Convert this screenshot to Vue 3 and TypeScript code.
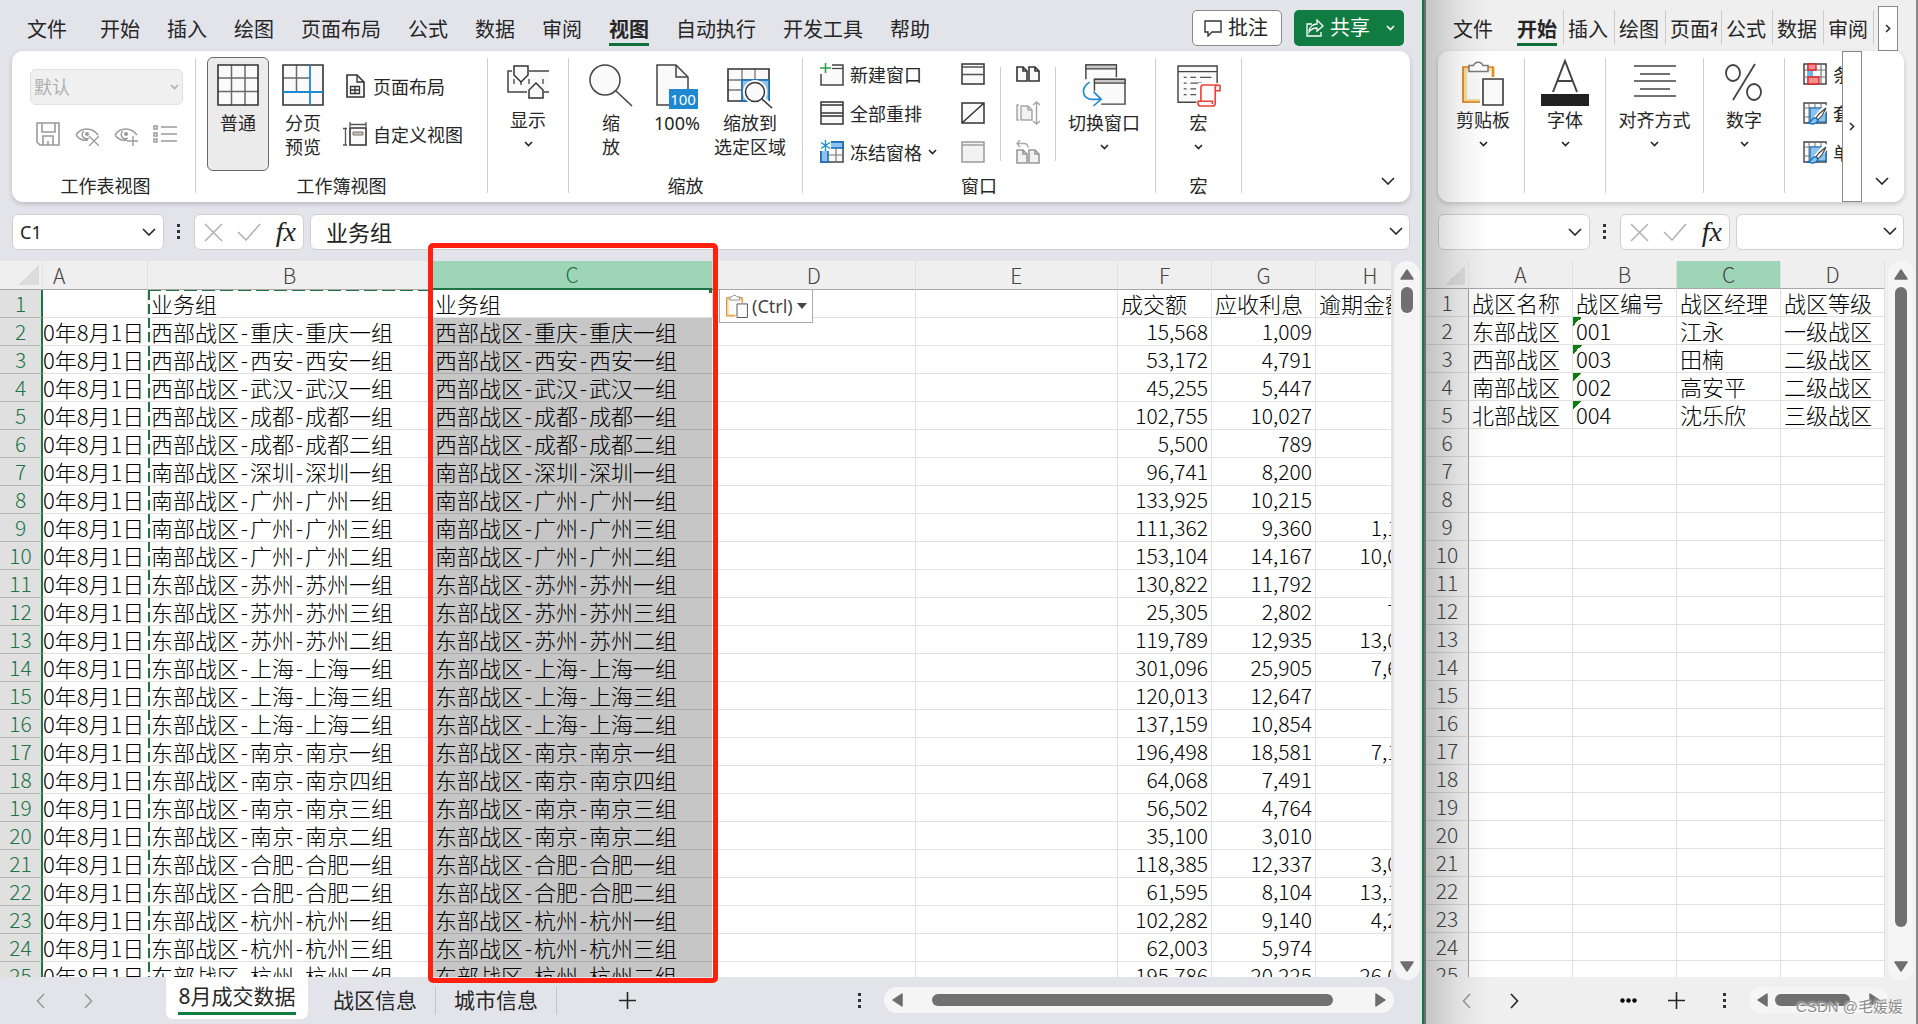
<script setup lang="ts">
import { ref } from 'vue'

interface DealRow {
  group: string
  amount: string
  interest: string
  overdue: string
}

const leftTabs: string[] = ['文件', '开始', '插入', '绘图', '页面布局', '公式', '数据', '审阅', '视图', '自动执行', '开发工具', '帮助']
const rightTabs: string[] = ['插入', '绘图', '页面布局', '公式', '数据', '审阅']
const sheets: string[] = ['8月成交数据', '战区信息', '城市信息']

const activeTab = ref('视图')
const activeSheet = ref('8月成交数据')
const nameBox = ref('C1')
const formula = ref('业务组')
const rightName = ref('')
const rightFormula = ref('')

const deal = (group: string, amount: string, interest: string, overdue = ''): DealRow => ({ group, amount, interest, overdue })

const deals: DealRow[] = [
  deal('西部战区-重庆-重庆一组', '15,568', '1,009'),
  deal('西部战区-西安-西安一组', '53,172', '4,791'),
  deal('西部战区-武汉-武汉一组', '45,255', '5,447'),
  deal('西部战区-成都-成都一组', '102,755', '10,027'),
  deal('西部战区-成都-成都二组', '5,500', '789'),
  deal('南部战区-深圳-深圳一组', '96,741', '8,200'),
  deal('南部战区-广州-广州一组', '133,925', '10,215'),
  deal('南部战区-广州-广州三组', '111,362', '9,360', '1,100'),
  deal('南部战区-广州-广州二组', '153,104', '14,167', '10,000'),
  deal('东部战区-苏州-苏州一组', '130,822', '11,792'),
  deal('东部战区-苏州-苏州三组', '25,305', '2,802', '700'),
  deal('东部战区-苏州-苏州二组', '119,789', '12,935', '13,000'),
  deal('东部战区-上海-上海一组', '301,096', '25,905', '7,600'),
  deal('东部战区-上海-上海三组', '120,013', '12,647'),
  deal('东部战区-上海-上海二组', '137,159', '10,854'),
  deal('东部战区-南京-南京一组', '196,498', '18,581', '7,100'),
  deal('东部战区-南京-南京四组', '64,068', '7,491'),
  deal('东部战区-南京-南京三组', '56,502', '4,764'),
  deal('东部战区-南京-南京二组', '35,100', '3,010'),
  deal('东部战区-合肥-合肥一组', '118,385', '12,337', '3,000'),
  deal('东部战区-合肥-合肥二组', '61,595', '8,104', '13,100'),
  deal('东部战区-杭州-杭州一组', '102,282', '9,140', '4,200'),
  deal('东部战区-杭州-杭州三组', '62,003', '5,974'),
  deal('东部战区-杭州-杭州二组', '195,786', '20,225', '26,000'),
]

const zones: string[][] = [
  ['战区名称', '战区编号', '战区经理', '战区等级'],
  ['东部战区', '001', '江永', '一级战区'],
  ['西部战区', '003', '田楠', '二级战区'],
  ['南部战区', '002', '高安平', '二级战区'],
  ['北部战区', '004', '沈乐欣', '三级战区'],
]

const zoneRows: string[][] = Array.from({ length: 25 }, (_, i) => zones[i] ?? ['', '', '', ''])
const pieces = (text: string): string[] => text.split(/(-)/)
</script>

<template>
  <svg class="defs" aria-hidden="true">
    <symbol id="chev" viewBox="0 0 14 8"><path d="M1 1l6 6 6-6" fill="none" stroke="currentColor" stroke-width="1.6" /></symbol>
    <symbol id="chev-s" viewBox="0 0 9 6"><path d="M1 1l3.5 3.6L8 1" fill="none" stroke="currentColor" stroke-width="1.6" /></symbol>
    <symbol id="left" viewBox="0 0 9 16"><path d="M8 1L1.500 8 8 15" fill="none" stroke="currentColor" stroke-width="1.6" /></symbol>
    <symbol id="right" viewBox="0 0 9 16"><path d="M1 1l6.500 7L1 15" fill="none" stroke="currentColor" stroke-width="1.6" /></symbol>
    <symbol id="right-s" viewBox="0 0 6 9"><path d="M1 1l3.600 3.500L1 8" fill="none" stroke="currentColor" stroke-width="1.5" /></symbol>
    <symbol id="kebab" viewBox="0 0 4 16"><path d="M0 0h3v3H0zM0 6h3v3H0zM0 12h3v3H0z" fill="#333" /></symbol>
    <symbol id="plus" viewBox="0 0 17 17"><path d="M8.500 0v17M0 8.500h17" stroke="currentColor" stroke-width="1.6" /></symbol>
    <symbol id="tri-up" viewBox="0 0 14 11"><path d="M7 1l6 9H1z" fill="#6e6e6e" stroke="#6e6e6e" stroke-linejoin="round" stroke-width="1.500" /></symbol>
    <symbol id="tri-down" viewBox="0 0 14 11"><path d="M7 10L1 1h12z" fill="#6e6e6e" stroke="#6e6e6e" stroke-linejoin="round" stroke-width="1.500" /></symbol>
    <symbol id="tri-left" viewBox="0 0 11 14"><path d="M1 7l9-6v12z" fill="#6e6e6e" stroke="#6e6e6e" stroke-linejoin="round" stroke-width="1.500" /></symbol>
    <symbol id="tri-right" viewBox="0 0 11 14"><path d="M10 7L1 1v12z" fill="#6e6e6e" stroke="#6e6e6e" stroke-linejoin="round" stroke-width="1.500" /></symbol>
    <symbol id="cross" viewBox="0 0 19 19"><path d="M1 1l17 17M18 1L1 18" fill="none" stroke="#b0b0b0" stroke-width="1.500" /></symbol>
    <symbol id="tick" viewBox="0 0 24 18"><path d="M1 9l8 8L23 1" fill="none" stroke="#b0b0b0" stroke-width="1.500" /></symbol>
    <symbol id="clip" viewBox="0 0 42 46">
      <path d="M3 9h28v32H3z" fill="#fafafa" stroke="#f6dc9c" stroke-width="4" />
      <path d="M20 42H1V7h6M25 7h6v10" fill="none" stroke="#e07c1a" stroke-width="1.700" />
      <path d="M7 5.500h4.500a5 5 0 0 1 9.400 0H26v6H7z" fill="#fff" stroke="#7a7a7a" stroke-width="1.500" />
      <path d="M18 17h24v29H18z" fill="#fff" /><path d="M21 19h20v26H21z" fill="#fafafa" stroke="#3a3a3a" stroke-width="1.600" />
    </symbol>
    <symbol id="brushgrid" viewBox="0 0 24 24">
      <path d="M1 2h22v20H1z" fill="#fafafa" stroke="#444" stroke-width="1.400" />
      <path d="M6 2v20M12 2v20M18 2v20M1 7h22M1 16h22" stroke="#777" stroke-width="1" />
      <path d="M7 7h16v14H7z" fill="#8cc3ee" stroke="#1068b8" stroke-width="1.200" />
      <path d="M24 5L13 18" stroke="#fff" stroke-width="6" />
      <path d="M23 7l-7 6-3 4 2 2 4-4z" fill="#fff" stroke="#444" stroke-width="1.200" />
      <path d="M13 17c-5-1-3 4-8 5 5 2 9 1 10-3z" fill="#8cc3ee" stroke="#1068b8" stroke-width="1.300" />
    </symbol>
  </svg>

  <main class="desk">
    <section class="win win-left">
      <header class="top">
        <nav class="tabs">
          <button v-for="t in leftTabs" :key="t" class="tab" :class="{ on: t === activeTab, file: t === '文件' }" @click="activeTab = t">{{ t }}</button>
        </nav>
        <div class="actions">
          <button class="act comment">
            <svg width="18" height="17" viewBox="0 0 18 17"><path d="M1 1h16v11H8l-4 4v-4H1z" fill="none" stroke="#333" stroke-width="1.400" /></svg>
            批注
          </button>
          <button class="act share">
            <svg width="18" height="18" viewBox="0 0 18 18"><path d="M6 5H1v12h14v-4M3 13c0-5 4-8 8-8V1l6 6-6 5V9c-4 0-6 1-8 4z" fill="none" stroke="#fff" stroke-width="1.300" /></svg>
            共享
            <svg class="share-chev" width="9" height="6"><use href="#chev-s" /></svg>
          </button>
        </div>
      </header>

      <div class="ribbon">
        <div class="group g-sheetview">
          <div class="body stack">
            <label class="view-select">
              <select disabled aria-label="工作表视图"><option>默认</option></select>
              <svg width="9" height="6"><use href="#chev-s" /></svg>
            </label>
            <div class="mini-icons">
              <button aria-label="保存"><svg width="24" height="24" viewBox="0 0 24 24"><path d="M1 1h22v22H4l-3-3zM6 1v9h13V1M7 23v-9h10v9M12 19v4" fill="none" stroke="#9a9a9a" stroke-width="1.600" /></svg></button>
              <button aria-label="退出"><svg width="24" height="24" viewBox="0 0 24 24"><path d="M1 13C6 5 17 5 23 13M1 13c3 4 7 6 12 5M9 9a4 4 0 1 0 5 7" fill="none" stroke="#9a9a9a" stroke-width="1.500" /><circle cx="12" cy="12" r="2" fill="#9a9a9a" /><path d="M14 14l10 10M24 14L14 24" stroke="#9a9a9a" stroke-width="1.300" /></svg></button>
              <button aria-label="新建"><svg width="24" height="24" viewBox="0 0 24 24"><path d="M1 13C6 5 17 5 23 13M1 13c3 4 7 6 12 5M9 9a4 4 0 1 0 5 7" fill="none" stroke="#9a9a9a" stroke-width="1.500" /><circle cx="12" cy="12" r="2" fill="#9a9a9a" /><path d="M19 14v11M13 19h11" stroke="#9a9a9a" stroke-width="1.400" /></svg></button>
              <button aria-label="选项"><svg width="24" height="24" viewBox="0 0 24 24"><path d="M1 4h3v3H1zM1 11h3v3H1zM1 17h3v3H1zM8 5h16M8 12h16M8 19h16" fill="none" stroke="#9a9a9a" stroke-width="1.500" /></svg></button>
            </div>
          </div>
          <div class="caption">工作表视图</div>
        </div>

        <div class="group g-bookview">
          <div class="body">
            <button class="big picked">
              <svg width="42" height="42" viewBox="0 0 42 42"><path d="M1 1h40v40H1z" fill="#fafafa" /><path d="M14.500 1v40M28 1v40M1 14h40M1 27.500h40" stroke="#6b6b6b" stroke-width="1.500" /><path d="M1 1h40v40H1z" fill="none" stroke="#333" stroke-width="1.600" /></svg>
              <span>普通</span>
            </button>
            <button class="big paged">
              <svg width="42" height="42" viewBox="0 0 42 42"><path d="M1 1h40v40H1z" fill="#fafafa" /><path d="M14.500 1v26M1 14h27" stroke="#6b6b6b" stroke-width="1.500" /><path d="M1 1h40v40H1z" fill="none" stroke="#333" stroke-width="1.600" /><path d="M28 1v40M1 28h40" stroke="#1e88d2" stroke-width="1.800" /></svg>
              <span>分页<br />预览</span>
            </button>
            <div class="rows wide">
              <button class="row">
                <svg width="24" height="24" viewBox="0 0 24 24"><path d="M4 1h10l7 7v15H4z" fill="#fafafa" stroke="#333" stroke-width="1.600" /><path d="M14 1v7h7M7.500 12.500h9v7h-9zM12 12v8M7 16h10" fill="none" stroke="#333" stroke-width="1.300" /></svg>
                页面布局
              </button>
              <button class="row">
                <svg width="24" height="24" viewBox="0 0 24 24"><path d="M7 6h16v17H7z" fill="#fafafa" stroke="#333" stroke-width="1.600" /><path d="M7 2.500h16M7 0v5M23 0v5M2.500 7v16M0 6.500h4M0 23h4" fill="none" stroke="#555" stroke-width="1.300" /><path d="M10 10h10v3H10z" fill="#ccc3b8" stroke="#777" /></svg>
                自定义视图
              </button>
            </div>
          </div>
          <div class="caption">工作簿视图</div>
        </div>

        <div class="group g-show">
          <div class="body">
            <button class="big fold">
              <svg width="42" height="42" viewBox="0 0 42 42"><path d="M1 7h41v20H1z" fill="#fafafa" /><path d="M5 7H1v21h19M22 7h20M37 28h5" fill="none" stroke="#444" stroke-width="1.500" /><path d="M7 15v5M22 15v5M36 15v5M14 18v3" stroke="#444" stroke-width="1.300" /><path d="M7 2h14v9l-7 7-7-7zM22 34V26l7-7 7 7v8z" fill="#fafafa" stroke="#333" stroke-width="1.500" /></svg>
              <span>显示</span>
              <svg width="9" height="6"><use href="#chev-s" /></svg>
            </button>
          </div>
        </div>

        <div class="group g-zoom">
          <div class="body">
            <button class="big zoom">
              <svg width="44" height="42" viewBox="0 0 44 42"><circle cx="16" cy="16" r="15" fill="#fafafa" stroke="#444" stroke-width="1.500" /><path d="M27 27l16 15" stroke="#444" stroke-width="1.600" /></svg>
              <span>缩<br />放</span>
            </button>
            <button class="big zoom">
              <svg width="42" height="42" viewBox="0 0 42 42"><path d="M1 1h19l12 12v28H1z" fill="#fafafa" stroke="#444" stroke-width="1.500" /><path d="M20 1v12h12" fill="none" stroke="#444" stroke-width="1.500" /><path d="M13 25h29v20H13z" fill="#1e88d2" /><text x="27" y="41" text-anchor="middle" font-family="Noto Sans, sans-serif" font-size="15" fill="#fff">100</text></svg>
              <span>100%</span>
            </button>
            <button class="big zoomsel">
              <svg width="46" height="42" viewBox="0 0 46 42"><path d="M1 5h41v32H1z" fill="#fafafa" /><path d="M15 5v32M28 5v32M1 16h41M1 26h41" stroke="#777" stroke-width="1.300" /><path d="M1 5h41v32H1z" fill="none" stroke="#333" stroke-width="1.600" /><path d="M15 16h27v21H15z" fill="#8cc3ee" stroke="#1068b8" stroke-width="1.500" /><circle cx="28" cy="28" r="12" fill="#fff" /><path d="M34 33l11 10" stroke="#fff" stroke-width="5" /><circle cx="28" cy="28" r="9.500" fill="#fafafa" stroke="#333" stroke-width="1.500" /><path d="M35 35l10 9" stroke="#333" stroke-width="1.600" /></svg>
              <span>缩放到<br />选定区域</span>
            </button>
          </div>
          <div class="caption">缩放</div>
        </div>

        <div class="group g-window">
          <div class="body">
            <div class="rows main-rows">
              <button class="row">
                <svg width="24" height="24" viewBox="0 0 24 24"><path d="M1 12v11h22V3H12" fill="#fafafa" stroke="#444" stroke-width="1.500" /><path d="M12 6.500h11" stroke="#444" stroke-width="1.200" /><path d="M5.500 1v10M0 6h11" stroke="#2a9d4a" stroke-width="1.500" /></svg>
                新建窗口
              </button>
              <button class="row">
                <svg width="24" height="24" viewBox="0 0 24 24"><path d="M1 1h22v22H1z" fill="#fafafa" stroke="#333" stroke-width="1.500" /><path d="M1 4h22M1 12h22M1 15h22" stroke="#333" stroke-width="1.400" /></svg>
                全部重排
              </button>
              <button class="row">
                <svg width="24" height="24" viewBox="0 0 24 24"><path d="M1 2h22v20H1z" fill="#fafafa" stroke="#444" stroke-width="1.500" /><path d="M16 8v14M8 15h15" stroke="#777" stroke-width="1.200" /><path d="M8 2h15v6H8zM1 8h7v14H1z" fill="#8cc3ee" stroke="#1068b8" stroke-width="1.500" /><path d="M0 0h11v11H0z" fill="#fff" /><path d="M5.500 0v11M1 2.500l9 6M10 2.500l-9 6" stroke="#1e88d2" stroke-width="1.300" /></svg>
                冻结窗格
                <svg width="9" height="6"><use href="#chev-s" /></svg>
              </button>
            </div>
            <div class="rows">
              <button class="row" aria-label="拆分"><svg width="24" height="24" viewBox="0 0 24 24"><path d="M1 2h22v20H1z" fill="#fafafa" stroke="#333" stroke-width="1.500" /><path d="M1 5h22M1 12.500h22" stroke="#555" stroke-width="1.400" /></svg></button>
              <button class="row" aria-label="隐藏"><svg width="24" height="24" viewBox="0 0 24 24"><path d="M1 2h22v20H1zM1 22L23 2" fill="#fafafa" stroke="#333" stroke-width="1.500" /></svg></button>
              <button class="row" aria-label="取消隐藏"><svg width="24" height="24" viewBox="0 0 24 24"><path d="M1 2h22v20H1z" fill="#f2f2f2" stroke="#9a9a9a" stroke-width="1.500" /><path d="M1 5h22" stroke="#9a9a9a" stroke-width="1.400" /></svg></button>
            </div>
            <i class="inner-sep"></i>
            <div class="rows">
              <button class="row" aria-label="并排查看"><svg width="24" height="24" viewBox="0 0 24 24"><path d="M1 5h6l4 4v10H1zM13 5h6l4 4v10H13zM7 5v4h4M19 5v4h4" fill="#fafafa" stroke="#333" stroke-width="1.600" /></svg></button>
              <button class="row" aria-label="同步滚动"><svg width="24" height="24" viewBox="0 0 24 24"><path d="M5 5h7l4 4v10H5zM12 5v4h4M3 4H1v15h2" fill="#f2f2f2" stroke="#a8a8a8" stroke-width="1.500" /><path d="M20.500 1v22M17 4l3.500-3L24 4M17 20l3.500 3 3.500-3" fill="none" stroke="#a8a8a8" stroke-width="1.500" /></svg></button>
              <button class="row" aria-label="重设窗口位置"><svg width="24" height="24" viewBox="0 0 24 24"><path d="M1 10h6l4 4v9H1zM13 10h6l4 4v9H13zM7 10v4h4M19 10v4h4" fill="#f2f2f2" stroke="#999" stroke-width="1.600" /><path d="M4 0L1 3.500 4 7M1 3.500h7q4 0 4 4" fill="none" stroke="#a8a8a8" stroke-width="1.500" /></svg></button>
            </div>
            <i class="inner-sep last"></i>
            <button class="big switch">
              <svg width="46" height="44" viewBox="0 0 46 44"><path d="M4 16V1h32v13" fill="#fafafa" stroke="#444" stroke-width="1.500" /><path d="M4 1h32v4H4z" fill="#c8c8c8" stroke="#444" stroke-width="1.300" /><path d="M13 28V16h32v26H20" fill="#fafafa" stroke="#444" stroke-width="1.500" /><path d="M13 16h32v4H13z" fill="#c8c8c8" stroke="#444" stroke-width="1.300" /><path d="M8 19C-2 25 0 37 11 37h8M12 29l8 8-8 7" fill="none" stroke="#1e88d2" stroke-width="1.700" /></svg>
              <span>切换窗口</span>
              <svg width="9" height="6"><use href="#chev-s" /></svg>
            </button>
          </div>
          <div class="caption">窗口</div>
        </div>

        <div class="group g-macro">
          <div class="body">
            <button class="big macro">
              <svg width="46" height="44" viewBox="0 0 46 44"><path d="M1 2h41v38H1z" fill="#fafafa" stroke="#444" stroke-width="1.500" /><path d="M1 8h41" stroke="#444" stroke-width="1.500" /><path d="M7 14h3M14 14h6M24 14h12M7 20h3M14 20h12M7 26h3M14 26h6M7 32h3M14 32h6" stroke="#555" stroke-width="1.300" /><path d="M22 20h24v24H20z" fill="#fff" /><path d="M43 22H27q-2 0-2 3v14h-3v2q0 3 3 3h12q3 0 3-3V25q0-3 3-3t2 3v3h-5M25 39h12v3" fill="#fafafa" stroke="#ee4035" stroke-width="1.700" /></svg>
              <span>宏</span>
              <svg width="9" height="6"><use href="#chev-s" /></svg>
            </button>
          </div>
          <div class="caption">宏</div>
        </div>
        <button class="collapse" aria-label="折叠功能区"><svg width="14" height="8"><use href="#chev" /></svg></button>
      </div>

      <div class="fbar">
        <label class="box namebox"><input v-model="nameBox" aria-label="名称框" /><svg width="14" height="8"><use href="#chev" /></svg></label>
        <svg class="fkebab" width="4" height="16"><use href="#kebab" /></svg>
        <div class="box fx">
          <button aria-label="取消"><svg width="19" height="19"><use href="#cross" /></svg></button>
          <button aria-label="输入"><svg width="24" height="18"><use href="#tick" /></svg></button>
          <button class="fxbtn">fx</button>
        </div>
        <label class="box finput"><input v-model="formula" aria-label="编辑栏" /><svg width="14" height="8"><use href="#chev" /></svg></label>
      </div>

      <div class="sheet">
        <div class="viewport">
          <table class="grid deals">
            <colgroup>
              <col class="c-num" /><col class="c-a" /><col class="c-b" /><col class="c-c" /><col /><col /><col class="c-f" /><col class="c-g" /><col class="c-h" />
            </colgroup>
            <thead>
              <tr>
                <th class="corner"></th>
                <th class="ha">A</th><th>B</th><th class="sel">C</th><th>D</th><th>E</th><th>F</th><th>G</th><th>H</th>
              </tr>
            </thead>
            <tbody>
              <tr>
                <th>1</th>
                <td></td>
                <td class="ants first">业务组</td>
                <td class="active">业务组</td>
                <td></td><td></td>
                <td>成交额</td><td>应收利息</td><td>逾期金额</td>
              </tr>
              <tr v-for="(d, i) in deals" :key="i">
                <th>{{ i + 2 }}</th>
                <td class="date">0年8月1日</td>
                <td class="ants"><span v-for="(p, k) in pieces(d.group)" :key="k" :class="{ dash: p === '-' }">{{ p }}</span></td>
                <td class="picked-col"><span v-for="(p, k) in pieces(d.group)" :key="k" :class="{ dash: p === '-' }">{{ p }}</span></td>
                <td></td><td></td>
                <td class="num">{{ d.amount }}</td>
                <td class="num">{{ d.interest }}</td>
                <td class="num">{{ d.overdue }}</td>
              </tr>
            </tbody>
          </table>
        </div>
        <div class="vscroll short">
          <svg width="14" height="11"><use href="#tri-up" /></svg>
          <i class="thumb"></i>
          <svg class="end" width="14" height="11"><use href="#tri-down" /></svg>
        </div>
        <div class="marker"></div>
        <button class="paste">
          <svg width="22" height="24"><use href="#clip" /></svg>
          (Ctrl)
          <i class="caret"></i>
        </button>
      </div>

      <footer class="foot">
        <button class="nav off" aria-label="上一个"><svg width="9" height="16"><use href="#left" /></svg></button>
        <button class="nav off" aria-label="下一个"><svg width="9" height="16"><use href="#right" /></svg></button>
        <div class="sheet-tabs">
          <button v-for="s in sheets" :key="s" class="sheet-tab" :class="{ on: s === activeSheet }" @click="activeSheet = s"><span>{{ s }}</span></button>
        </div>
        <button class="add" aria-label="新工作表"><svg width="17" height="17"><use href="#plus" /></svg></button>
        <svg class="foot-kebab" width="4" height="16"><use href="#kebab" /></svg>
        <div class="hscroll">
          <svg width="11" height="14"><use href="#tri-left" /></svg>
          <i class="thumb"></i>
          <svg width="11" height="14"><use href="#tri-right" /></svg>
        </div>
      </footer>
    </section>

    <section class="win win-right">
      <header class="top">
        <nav class="tabs">
          <button class="tab file">文件</button>
          <button class="tab on">开始</button>
          <button v-for="t in rightTabs" :key="t" class="tab cell" :class="{ long: t.length > 2 }"><span>{{ t }}</span></button>
        </nav>
        <button class="more" aria-label="更多选项卡"><svg width="6" height="9"><use href="#right-s" /></svg></button>
      </header>

      <div class="ribbon">
        <div class="group r1"><div class="body"><button class="big fold">
          <svg class="tall" width="42" height="46"><use href="#clip" /></svg><span>剪贴板</span><svg width="9" height="6"><use href="#chev-s" /></svg>
        </button></div></div>
        <div class="group r2"><div class="body"><button class="big fold">
          <svg class="tall" width="48" height="46" viewBox="0 0 48 46"><path d="M12 32L24 1l12 31M16 21h16" fill="none" stroke="#444" stroke-width="2" /><path d="M0 34h48v12H0z" fill="#222" /></svg><span>字体</span><svg width="9" height="6"><use href="#chev-s" /></svg>
        </button></div></div>
        <div class="group r3"><div class="body"><button class="big fold">
          <svg width="42" height="42" viewBox="0 0 42 42"><path d="M0 2h42M6 10h30M0 17h42M6 25h30M0 32h42" stroke="#444" stroke-width="1.600" /></svg><span>对齐方式</span><svg width="9" height="6"><use href="#chev-s" /></svg>
        </button></div></div>
        <div class="group r4"><div class="body"><button class="big fold">
          <svg width="38" height="42" viewBox="0 0 38 42"><ellipse cx="8" cy="9" rx="7" ry="8" fill="none" stroke="#444" stroke-width="1.800" /><ellipse cx="29" cy="28" rx="7" ry="8" fill="none" stroke="#444" stroke-width="1.800" /><path d="M30 0L8 36" stroke="#444" stroke-width="1.800" /></svg><span>数字</span><svg width="9" height="6"><use href="#chev-s" /></svg>
        </button></div></div>
        <div class="styles">
          <button class="row">
            <svg width="24" height="24" viewBox="0 0 24 24"><path d="M1 2h22v20H1z" fill="#fafafa" stroke="#444" stroke-width="1.500" /><path d="M5 2v20M18 2v20M1 8h22M1 15h22" stroke="#777" stroke-width="1.200" /><path d="M5 9h5v6H5z" fill="#6db3ea" /><path d="M5 2h8v6H5zM5 15h11v7H5z" fill="#ff8f8f" stroke="#d9262c" stroke-width="1.300" /></svg>
            条
          </button>
          <button class="row"><svg width="24" height="24"><use href="#brushgrid" /></svg>套</button>
          <button class="row"><svg width="24" height="24"><use href="#brushgrid" /></svg>单</button>
        </div>
        <button class="side" aria-label="更多命令"><svg width="6" height="9"><use href="#right-s" /></svg></button>
        <button class="collapse" aria-label="折叠功能区"><svg width="14" height="8"><use href="#chev" /></svg></button>
      </div>

      <div class="fbar">
        <label class="box namebox"><input v-model="rightName" aria-label="名称框" /><svg width="14" height="8"><use href="#chev" /></svg></label>
        <svg class="fkebab" width="4" height="16"><use href="#kebab" /></svg>
        <div class="box fx">
          <button aria-label="取消"><svg width="19" height="19"><use href="#cross" /></svg></button>
          <button aria-label="输入"><svg width="24" height="18"><use href="#tick" /></svg></button>
          <button class="fxbtn">fx</button>
        </div>
        <label class="box finput"><input v-model="rightFormula" aria-label="编辑栏" /><svg width="14" height="8"><use href="#chev" /></svg></label>
      </div>

      <div class="sheet">
        <div class="viewport">
          <table class="grid zones">
            <colgroup><col class="c-num" /><col /><col /><col /><col /></colgroup>
            <thead>
              <tr><th class="corner"></th><th>A</th><th>B</th><th class="sel">C</th><th>D</th></tr>
            </thead>
            <tbody>
              <tr v-for="(r, i) in zoneRows" :key="i">
                <th>{{ i + 1 }}</th>
                <td v-for="(c, k) in r" :key="k" :class="{ code: k === 1 && i > 0 && c }">{{ c }}</td>
              </tr>
            </tbody>
          </table>
        </div>
        <div class="vscroll">
          <svg width="14" height="11"><use href="#tri-up" /></svg>
          <i class="thumb"></i>
          <svg class="end" width="14" height="11"><use href="#tri-down" /></svg>
        </div>
      </div>

      <footer class="foot">
        <button class="nav off" aria-label="上一个"><svg width="9" height="16"><use href="#left" /></svg></button>
        <button class="nav" aria-label="下一个"><svg width="9" height="16"><use href="#right" /></svg></button>
        <button class="dots" aria-label="全部工作表"><svg width="17" height="5" viewBox="0 0 17 5"><circle cx="2.500" cy="2.500" r="2.200" /><circle cx="8.500" cy="2.500" r="2.200" /><circle cx="14.500" cy="2.500" r="2.200" /></svg></button>
        <button class="add" aria-label="新工作表"><svg width="17" height="17"><use href="#plus" /></svg></button>
        <svg class="foot-kebab" width="4" height="16"><use href="#kebab" /></svg>
        <div class="hscroll">
          <svg width="11" height="14"><use href="#tri-left" /></svg>
          <i class="thumb"></i>
          <svg width="11" height="14"><use href="#tri-right" /></svg>
        </div>
      </footer>
      <div class="shade"></div>
      <div class="watermark">CSDN @毛媛媛</div>
    </section>
  </main>
</template>

<style>
body {
  margin: 0;
  overflow: hidden;
}
</style>

<style scoped>
* {
  box-sizing: border-box;
}
.defs {
  position: absolute;
  width: 0;
  height: 0;
}
.desk {
  display: grid;
  grid-template-columns: 1426fr 492fr;
  height: 100vh;
  font-family: 'Noto Sans', 'Noto Sans CJK SC', sans-serif;
  font-size: 18px;
  color: #262626;
}
button {
  margin: 0;
  padding: 0;
  border: 0;
  background: none;
  font: inherit;
  color: inherit;
  white-space: nowrap;
}
svg {
  display: block;
  flex: none;
}
.win {
  position: relative;
  display: flex;
  flex-direction: column;
  min-width: 0;
  min-height: 0;
  overflow: hidden;
}
.win-left {
  background: #e3e4ea;
  border-right: 2px solid #6e6e6e;
  box-shadow: inset -2px 0 #107c41;
  padding-right: 2px;
}
.win-right {
  background: #efefef;
  border-right: 2px solid #8a8a8a;
}

/* tab strip */
.top {
  display: flex;
  height: 51px;
  flex: none;
}
.tabs {
  display: flex;
  align-items: flex-start;
  gap: 27px;
  padding-left: 27px;
  font-size: 20px;
}
.tab {
  padding-top: 16px;
  line-height: 27px;
  border-bottom: 3px solid transparent;
}
.tab.file {
  margin-right: 6px;
}
.tab.on {
  font-weight: 700;
  border-bottom-color: #0f703b;
}
.actions {
  display: flex;
  gap: 12px;
  margin: 10px 18px 0 auto;
}
.act {
  display: flex;
  align-items: center;
  height: 36px;
  border-radius: 5px;
  font-size: 20px;
  line-height: 28px;
}
.comment {
  width: 90px;
  gap: 6px;
  padding-left: 11px;
  background: #fff;
  border: 1px solid #8a8a8a;
}
.share {
  width: 110px;
  gap: 6px;
  padding-left: 12px;
  background: #107c41;
  color: #fff;
}
.share-chev {
  margin-left: 10px;
}
.win-right .tabs {
  flex: 1;
  gap: 0;
}
.win-right .tab {
  flex: none;
}
.win-right .tab.file {
  margin-right: 24px;
}
.win-right .tab.on {
  margin-right: 6px;
}
.tab.cell {
  width: 51px;
  padding: 6px 4px 0;
  margin-top: 10px;
  border-left: 1px solid #ccc;
  text-align: left;
}
.tab.cell:last-child {
  border-right: 1px solid #ccc;
}
.tab.cell.long {
  width: 56px;
}
.tab.cell.long span {
  display: block;
  overflow: hidden;
}
.more {
  display: grid;
  place-items: center;
  flex: none;
  width: 20px;
  margin: 6px 18px 0 0;
  background: #fff;
  border: 1px solid #8a8a8a;
}

/* ribbon */
.ribbon {
  display: flex;
  flex: none;
  height: 151px;
  margin: 0 12px;
  background: #fff;
  border-radius: 11px;
  box-shadow: 0 2px 5px rgba(0, 0, 0, 0.18);
}
.group {
  display: flex;
  flex-direction: column;
  flex: none;
  padding: 3px 1px 7px 0;
  background: linear-gradient(#cfcfcf, #cfcfcf) right 7px / 1px 135px no-repeat;
}
.body {
  display: flex;
  flex: 1;
  align-items: flex-start;
}
.caption {
  height: 18px;
  line-height: 18px;
  text-align: center;
}
.g-sheetview {
  width: 184px;
  padding-left: 4px;
}
.g-bookview { width: 292px; }
.g-bookview .body { padding-left: 11px; }
.g-show { width: 81px; }
.g-zoom { width: 234px; }
.g-zoom .body { padding-left: 9px; }
.g-window { width: 353px; }
.g-window .body { padding-left: 17px; }
.g-macro { width: 86px; }
.r1 {
  width: 87px;
  padding-left: 4px;
}
.r2 { width: 81px; }
.r3 { width: 98px; }
.r4 { width: 81px; }
.body.stack {
  flex-direction: column;
  padding: 15px 12px 0 14px;
}
.view-select {
  position: relative;
  width: 100%;
  color: #b0b0b0;
}
.view-select select {
  display: block;
  width: 100%;
  height: 36px;
  padding: 0 3px;
  appearance: none;
  background: #f0f0f0;
  border: 1px solid #e0e0e0;
  border-radius: 6px;
  font: inherit;
  color: #b0b0b0;
  opacity: 1;
}
.view-select svg {
  position: absolute;
  right: 4px;
  top: 15px;
}
.mini-icons {
  display: flex;
  gap: 15px;
  padding: 17px 6px 0;
}
.big {
  display: flex;
  flex-direction: column;
  align-items: center;
  height: 114px;
  margin-top: 3px;
  padding-top: 6px;
  border: 1px solid transparent;
  border-radius: 6px;
  line-height: 24px;
}
.big > svg:first-child {
  height: 42px;
  margin-bottom: 5px;
  overflow: visible;
}
.big > svg:last-child {
  margin-top: 9px;
}
.big.fold {
  width: 100%;
}
.big.fold > svg:first-child {
  margin-bottom: 2px;
}
.big.fold > svg.tall {
  height: 46px;
  margin: -4px 0 2px;
}
.big.picked {
  width: 62px;
  background: #ebebeb;
  border-color: #6a6a6a;
}
.big.paged { width: 68px; }
.big.zoom { width: 66px; }
.big.zoomsel { width: 80px; }
.big.switch { width: 96px; }
.big.macro { width: 87px; }
.rows {
  display: flex;
  flex-direction: column;
}
.row {
  display: flex;
  align-items: center;
  gap: 6px;
  height: 39px;
}
.rows.wide {
  padding: 8px 0 0 6px;
}
.rows.wide .row {
  height: 48px;
}
.main-rows {
  width: 141px;
}
.inner-sep {
  width: 1px;
  height: 94px;
  margin: 13px 15px 0;
  background: #cfcfcf;
}
.inner-sep.last {
  margin-right: 0;
}
.collapse {
  align-self: flex-end;
  margin: 0 15px 17px auto;
}
.styles {
  flex: 1;
  min-width: 0;
  padding: 3px 0 0 18px;
  overflow: hidden;
}
.side {
  display: grid;
  place-items: center;
  flex: none;
  width: 20px;
  background: #fff;
  border: 1px solid #8a8a8a;
}
.win-right .collapse {
  margin-left: 13px;
}

/* formula bar */
.fbar {
  display: flex;
  flex: none;
  align-items: center;
  height: 36px;
  margin: 12px 12px 11px;
}
.box {
  display: flex;
  align-items: center;
  height: 36px;
  background: #fff;
  border: 1px solid #d0d0d0;
  border-radius: 6px;
}
.box input {
  flex: 1;
  min-width: 0;
  height: 32px;
  padding: 0;
  border: 0;
  outline: 0;
  background: none;
  font: inherit;
  color: #222;
}
.namebox {
  width: 152px;
  padding: 0 7px 0 7px;
}
.fkebab {
  margin: 0 13px;
}
.fx {
  width: 110px;
  justify-content: space-between;
  padding: 0 7px 0 9px;
}
.fxbtn {
  font: italic 400 28px/30px 'Liberation Serif', serif;
  color: #222;
}
.finput {
  flex: 1;
  min-width: 0;
  margin-left: 6px;
  padding: 0 6px 3px 15px;
}
.finput input {
  font-size: 22px;
}

/* sheet */
.sheet {
  position: relative;
  display: flex;
  flex: 1;
  min-height: 0;
}
.viewport {
  flex: 1;
  min-width: 0;
  overflow: hidden;
  background: #fff;
}
.grid {
  table-layout: fixed;
  width: 100%;
  border-collapse: separate;
  border-spacing: 0;
  font: 300 22px/27px 'Noto Sans CJK SC', sans-serif;
  color: #000;
}
.deals {
  width: calc(100% + 34px);
}
.c-num { width: 43px; }
.c-a { width: 105px; }
.c-b { width: 284px; }
.c-c { width: 281px; }
.c-f { width: 94px; }
.c-g { width: 104px; }
.c-h { width: 109px; }
.grid th,
.grid td {
  height: 28px;
  padding: 0 3px;
  border-right: 1px solid #e0e0e0;
  border-bottom: 1px solid #e0e0e0;
  white-space: nowrap;
  text-align: left;
}
.grid th {
  font-size: 21px;
  font-weight: 300;
  color: #444;
  text-align: center;
  background: #efefef;
}
.grid thead th {
  border-bottom-color: #a6a6a6;
}
.grid thead th.ha {
  padding-left: 10px;
  text-align: left;
}
.grid thead th.corner {
  border-right-color: #e4e4e4;
  background: linear-gradient(135deg, transparent 50%, #dcdcdc 50%) 19px 4px / 20px 20px no-repeat #efefef;
}
.deals thead th.sel {
  background: #9fd5b7;
  color: #217346;
  border-bottom: 2px solid #217346;
}
.deals tbody th {
  background: #e0e0e0;
  color: #217346;
  border-right: 2px solid #217346;
  border-bottom-color: #b4b4b4;
}
.zones thead th.sel {
  background: #9fd5b7;
}
.zones tbody th {
  border-right-color: #a0a0a0;
  border-bottom-color: #d4d4d4;
}
.grid td.num {
  font-size: 21px;
  text-align: right;
}
.grid td.date {
  padding: 0 4px 0 0;
  text-align: right;
  border-right-color: transparent;
}
.dash {
  display: inline-block;
  width: 11px;
  text-align: center;
}
.ants {
  background: repeating-linear-gradient(#217346 0 10px, #fff 10px 14px) left top / 2px 28px no-repeat;
}
.ants.first {
  background:
    repeating-linear-gradient(90deg, #217346 0 13px, #fff 13px 18px) left top / 100% 1px no-repeat,
    repeating-linear-gradient(#217346 0 10px, #fff 10px 14px) left top / 2px 28px no-repeat;
}
.grid td.picked-col {
  background: #c6c6c6;
  border-bottom-color: #aaa;
  border-right-color: #fff;
}
.grid td.active {
  background: linear-gradient(#217346, #217346) right top / 3px 3px no-repeat;
}
.code {
  background: linear-gradient(135deg, #107c10 50%, transparent 50%) left top / 9px 9px no-repeat;
}

.vscroll {
  display: flex;
  flex-direction: column;
  align-items: center;
  width: 26px;
  margin: 0 2px -3px 3px;
  padding: 8px 0;
  background: #f5f5f5;
  border-radius: 13px;
}
.vscroll .thumb {
  flex: 0 0 91%;
  width: 12px;
  margin-top: 7px;
  background: #707070;
  border-radius: 6px;
}
.vscroll.short .thumb {
  flex: 0 0 26px;
}
.vscroll .end {
  margin-top: auto;
}
.marker {
  position: absolute;
  top: -18px;
  bottom: -6px;
  left: 428px;
  width: 290px;
  border: 5px solid #ff2010;
  border-radius: 5px;
  pointer-events: none;
}
.paste {
  position: absolute;
  top: 28px;
  left: 719px;
  display: flex;
  align-items: center;
  gap: 4px;
  width: 94px;
  height: 34px;
  padding-left: 6px;
  background: #fff;
  border: 1px solid #ababab;
  color: #444;
}
.caret {
  border: 5px solid transparent;
  border-top: 6px solid #444;
  border-bottom: 0;
}

/* footer */
.foot {
  display: flex;
  flex: none;
  align-items: center;
  height: 47px;
  padding: 0 28px 0 16px;
}
.nav {
  display: grid;
  place-items: center;
  width: 48px;
  height: 47px;
  flex: none;
}
.nav.off {
  color: #9a9a9a;
}
.sheet-tabs {
  display: flex;
  align-self: stretch;
  margin-left: 54px;
  font-size: 21px;
}
.sheet-tab {
  display: flex;
  justify-content: center;
  width: 121px;
  height: 28px;
  margin-top: 10px;
  line-height: 27px;
  border-right: 1px solid #c4c4c8;
}
.sheet-tab.on {
  width: 142px;
  height: 42px;
  margin: 0 7px 0 0;
  padding-top: 5px;
  line-height: 29px;
  background: #fff;
  border: 0;
  border-radius: 0 0 7px 7px;
}
.sheet-tab.on span {
  height: 33px;
  border-bottom: 3px solid #107c41;
}
.add {
  margin-left: 62px;
}
.foot-kebab {
  margin-left: auto;
}
.hscroll {
  display: flex;
  align-items: center;
  width: 37%;
  height: 26px;
  margin: 0 0 1px 22px;
  padding: 0 8px;
  background: #f5f5f5;
  border-radius: 13px;
}
.hscroll .thumb {
  flex: 1;
  height: 12px;
  margin: 0 42px 0 29px;
  background: #707070;
  border-radius: 6px;
}
.dots {
  margin-left: 82px;
}
.win-right .add {
  margin-left: 31px;
}
.win-right .hscroll {
  flex: none;
  width: 139px;
}
.win-right .hscroll .thumb {
  margin: 0 19px 0 7px;
}
.shade {
  position: absolute;
  inset: 0 auto 0 0;
  width: 64px;
  background: linear-gradient(90deg, rgba(0, 0, 0, 0.18), rgba(0, 0, 0, 0.05) 55%, transparent);
  pointer-events: none;
}
.watermark {
  position: absolute;
  right: 13px;
  bottom: 5px;
  font: 15px/24px 'Liberation Sans', 'Noto Sans CJK SC', sans-serif;
  color: #8c8c8c;
  text-shadow: 0 0 2px #fff, 1px 1px 1px #fff;
}
</style>
